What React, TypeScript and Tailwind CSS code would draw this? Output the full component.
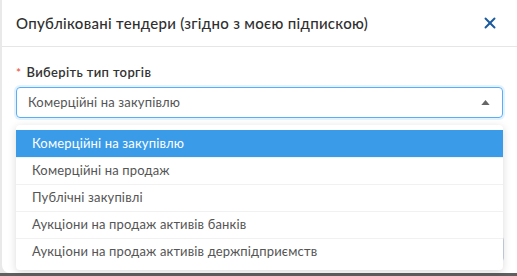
import { X } from 'lucide-react'

const options = [
  'Комерційні на закупівлю',
  'Комерційні на продаж',
  'Публічні закупівлі',
  'Аукціони на продаж активів банків',
  'Аукціони на продаж активів держпідприємств',
]

export default function App() {
  const selected = 0

  return (
    <div
      className="w-[517px] h-[276px] bg-[#5f5f5f] overflow-hidden"
      style={{ fontFamily: 'Lato, "Noto Sans", sans-serif' }}
    >
      <div className="w-full h-[273px] bg-[#e9e9e9] pl-[2px]">
        <div className="relative h-full bg-white rounded-bl-[8px]">
          {/* header */}
          <div className="h-[47px] flex items-center justify-between pl-[14px] pr-[18px] border-b border-[#e6e6e6]">
            <h1 className="text-[15px] font-medium text-[#2f2f2f] tracking-[0.3px]">
              Опубліковані тендери (згідно з моєю підпискою)
            </h1>
            <X className="w-[18px] h-[18px] text-[#1c5aa0]" strokeWidth={2.6} />
          </div>

          {/* body */}
          <div className="px-[14px] pt-[17px]">
            <label className="flex items-center gap-[5px] text-[13px] font-semibold text-[#333] h-[18px] tracking-[0.35px]">
              <span className="text-[#f0594a] text-[12px]">*</span>
              Виберіть тип торгів
            </label>
            <div className="mt-[5px] h-[31px] w-[487px] flex items-center justify-between pl-[11px] pr-[12px] border border-[#5aaef5] rounded-[4px] shadow-[0_0_0_2px_rgba(24,144,255,0.12)]">
              <span className="text-[13px] text-[#555] tracking-[0.15px]">Комерційні на закупівлю</span>
              <svg width="9" height="5" viewBox="0 0 10 6" className="text-[#666]">
                <path d="M5 0 L10 6 L0 6 Z" fill="currentColor" />
              </svg>
            </div>

            {/* field hidden behind dropdown */}
            <div className="mt-[118px] h-[26px] w-[488px] rounded-[4px] border border-[#c9d6e4]" />
          </div>

          {/* open dropdown */}
          <div className="absolute left-[14px] top-[125px] w-[487px] bg-white rounded-[4px] shadow-[0_2px_8px_rgba(0,0,0,0.15)] py-[5px]">
            {options.map((opt, i) => (
              <div
                key={opt}
                className={
                  i === selected
                    ? 'h-[27px] flex items-center px-[16px] text-[13px] tracking-[0.15px] bg-[#3a9be9] text-white'
                    : 'h-[27px] flex items-center px-[16px] text-[13px] tracking-[0.15px] text-[#555] border-t border-[#f1f1f1]'
                }
              >
                {opt}
              </div>
            ))}
          </div>
        </div>
      </div>
    </div>
  )
}
